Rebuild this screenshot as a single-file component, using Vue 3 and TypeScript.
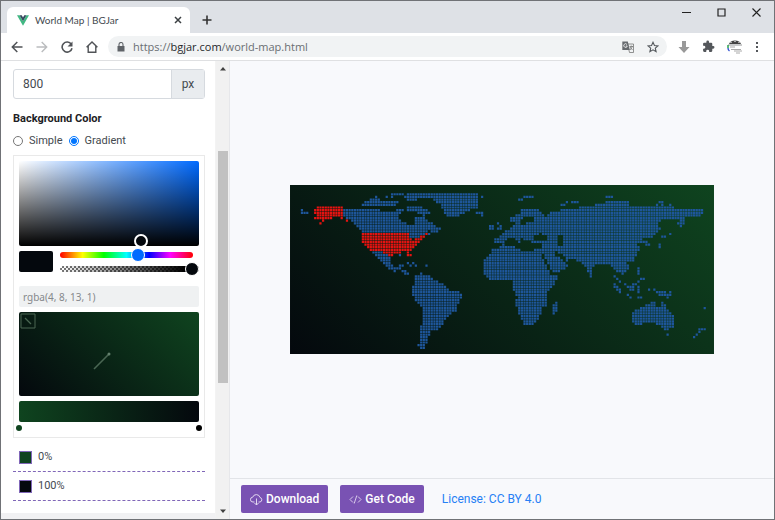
<script setup lang="ts">
import { computed, ref } from 'vue'

type Point = [number, number]

const mapWidth = 1269
const mapHeight = 507
const columns = 160
const rows = 64

/** "x,y x,y ..." to a list of points */
function shape(text: string): Point[] {
  return text.split(' ').map((pair) => pair.split(',').map(Number) as Point)
}

const usa: Point[][] = [
  '85,63 158,63 158,101 148,98 130,98 115,106 100,100 88,106 66,105 82,93 68,84',
  '212,140 352,140 355,157 370,163 380,157 408,144 410,152 395,163 385,175 370,190 360,197 362,214 353,214 350,200 325,203 312,208 300,212 285,204 272,198 250,198 230,190 216,172',
].map(shape)

const land: Point[][] = [
  // Canada
  '158,72 200,70 225,74 240,68 290,80 315,76 325,68 345,76 318,95 340,110 362,122 375,115 372,94 388,93 405,100 420,110 435,123 450,131 430,136 410,135 405,147 388,155 370,160 358,160 350,141 212,140 200,128 190,112 180,106 175,100 158,98',
  // Arctic islands
  '212,62 220,50 240,46 245,58 235,66',
  '228,46 262,34 275,48 300,50 296,66 275,66 255,60 240,68',
  '305,27 330,25 345,28 425,25 425,42 395,38 380,46 352,44 340,34 305,36',
  '300,44 325,48 320,62 300,60',
  '350,66 372,62 390,66 416,78 418,90 395,92 375,82 352,80',
  // Greenland
  '428,25 562,25 562,70 535,76 515,86 492,98 470,96 460,80 452,60 430,50',
  '555,78 585,78 576,92 558,90',
  // Mexico and Central America
  '238,196 272,198 300,212 304,225 304,240 320,246 328,236 340,234 335,250 350,253 355,272 345,270 332,258 318,252 290,248 278,232 268,225 262,212 250,208',
  // South America
  '370,275 390,264 415,270 430,280 442,290 458,293 465,305 485,317 510,322 518,328 508,345 502,365 495,382 477,385 465,405 455,420 440,435 422,440 412,455 415,468 405,475 408,490 390,490 383,480 390,460 385,447 392,425 395,385 395,363 380,355 370,335 362,320 365,305 373,293',
  // Africa
  '578,250 580,225 595,210 608,190 630,185 670,180 675,190 700,197 750,200 757,220 768,245 783,270 805,270 803,280 787,300 773,315 768,335 772,355 755,370 745,400 730,415 715,423 700,420 688,395 683,370 675,360 680,335 667,310 663,287 645,283 600,287 580,270',
  '790,352 805,348 800,375 790,390 782,385 785,370',
  // Europe and Asia
  '608,160 620,160 635,146 665,125 673,112 655,107 658,96 685,86 690,73 730,70 755,78 770,82 806,80 810,75 860,70 870,60 915,66 915,56 970,47 1010,46 1015,60 1075,60 1135,65 1170,70 1240,73 1240,90 1205,95 1185,95 1180,115 1167,130 1160,120 1165,103 1110,107 1100,120 1115,130 1105,140 1090,155 1055,163 1070,170 1078,182 1066,186 1058,172 1040,170 1045,190 1040,210 1025,230 1000,235 1020,240 1002,262 1002,270 980,258 968,248 950,237 935,237 910,240 902,277 890,258 880,240 865,226 830,225 822,233 833,245 800,260 785,263 775,245 765,220 757,202 710,190 700,174 688,178 675,158 650,160 640,170 630,178 608,178',
  // Australia and New Guinea
  '1020,377 1040,375 1055,365 1080,350 1095,350 1095,360 1110,365 1115,345 1125,365 1145,385 1153,410 1145,430 1125,435 1105,420 1080,410 1055,415 1030,422 1025,400',
  '1127,440 1138,440 1136,452 1128,450',
  '1095,312 1115,320 1135,322 1145,330 1130,338 1115,332 1100,330',
  '1010,300 1020,298 1028,290 1030,313 1015,315 1008,308',
  '966,288 980,302 995,318 990,326 978,312 966,300',
  '1222,425 1242,432 1218,448 1212,461 1200,462 1212,446 1220,440',
  // British Isles, Japan
  '618,107 627,107 628,118 636,128 634,136 618,134 624,122',
  '598,122 612,120 610,132 598,132',
  '1080,190 1100,186 1108,170 1114,170 1113,186 1095,194 1080,194',
  '1113,148 1124,153 1122,160 1112,158',
].map(shape)

const water: Point[][] = [
  '690,102 712,93 728,98 735,104 700,116 688,118',
  '755,78 778,82 770,92 757,90',
  '733,152 750,146 772,156 770,166 733,166',
  '798,150 815,148 815,180 800,180 804,165',
  '684,158 694,160 705,172 695,175',
  '705,168 717,165 722,174 755,178 755,190 706,186',
  '795,200 808,204 828,220 822,230 806,216 795,210',
].map(shape)

const islets: Point[] = shape(
  '32,78 32,86 40,82 48,82 55,82 92,114 100,106 174,106 573,33 410,150 418,146 428,142 436,142 444,142 ' +
    '350,230 365,230 378,238 412,244 333,210 360,245 684,41 692,41 700,38 708,34 716,38 724,34 ' +
    '812,62 820,58 828,54 844,48 852,48 860,48 944,33 952,33 960,38 1098,56 1104,50 1116,48 1114,60 1136,62 ' +
    '1142,150 1046,248 1041,256 1046,265 1054,279 1062,279 984,292 1040,312 1044,320 1040,304 1044,288 ' +
    '1012,332 1020,334 1042,338 1054,338 1075,312 1088,314 1140,324 1238,366 638,180 ' +
    '300,246 315,260 200,120 208,128 260,40 290,38 1036,300 974,276 982,284 1000,296',
)

function inside(x: number, y: number, polygon: Point[]): boolean {
  let hit = false
  for (let i = 0, j = polygon.length - 1; i < polygon.length; j = i++) {
    const [ax, ay] = polygon[i]
    const [bx, by] = polygon[j]
    if (ay > y !== by > y && x < ((bx - ax) * (y - ay)) / (by - ay) + ax) hit = !hit
  }
  return hit
}

const dots = computed(() => {
  const dx = mapWidth / columns
  const dy = mapHeight / rows
  const marked = new Set(islets.map(([x, y]) => `${Math.floor(x / dx)}:${Math.floor(y / dy)}`))
  let blue = ''
  let red = ''
  for (let r = 0; r < rows; r++) {
    for (let c = 0; c < columns; c++) {
      const x = (c + 0.5) * dx
      const y = (r + 0.5) * dy
      const cell = `M${(x - 3.3).toFixed(1)} ${(y - 3.3).toFixed(1)}h6.6v6.6h-6.6z`
      if (usa.some((p) => inside(x, y, p))) red += cell
      else if (marked.has(`${c}:${r}`)) {
        if (x < 180 && x > 60) red += cell
        else blue += cell
      } else if (land.some((p) => inside(x, y, p)) && !water.some((p) => inside(x, y, p))) blue += cell
    }
  }
  return { blue, red }
})

const width = ref('800')
const mode = ref('gradient')
const hue = ref(215)
const alpha = ref(100)
const color = ref('rgba(4, 8, 13, 1)')
const stops = [
  { color: '#0f441f', at: '0%' },
  { color: '#04080d', at: '100%' },
]
</script>

<template>
  <div class="window">
    <header class="tabs">
      <div class="tab">
        <svg class="vue" viewBox="0 0 24 21" aria-hidden="true">
          <path d="M0 0h5l7 12 7-12h5L12 21z" fill="#41b883" />
          <path d="M5 0h4.500L12 4.500 14.500 0H19l-7 12z" fill="#35495e" />
        </svg>
        <span class="tab-title">World Map | BGJar</span>
        <button class="icon" aria-label="Close tab">
          <svg width="8" height="8" viewBox="0 0 8 8"><path d="M1 1l6 6M7 1L1 7" stroke="#3c4043" stroke-width="1.500" /></svg>
        </button>
      </div>
      <button class="icon plus" aria-label="New tab">
        <svg width="10" height="10" viewBox="0 0 10 10"><path d="M5 .5v9M.5 5h9" stroke="#333" stroke-width="1.600" /></svg>
      </button>
      <div class="controls">
        <button class="icon" aria-label="Minimize">
          <svg width="9" height="9" viewBox="0 0 9 9"><path d="M0 4.500h9" stroke="#222" /></svg>
        </button>
        <button class="icon" aria-label="Maximize">
          <svg width="9" height="9" viewBox="0 0 9 9"><path d="M1 1h7v7H1z" fill="none" stroke="#222" stroke-width="1.200" /></svg>
        </button>
        <button class="icon" aria-label="Close">
          <svg width="9" height="9" viewBox="0 0 9 9"><path d="M.5.5l8 8M8.500.5l-8 8" stroke="#222" stroke-width="1.100" /></svg>
        </button>
      </div>
    </header>

    <nav class="toolbar">
      <div class="nav">
        <button class="icon" aria-label="Back">
          <svg width="12" height="12" viewBox="0 0 12 12"><path d="M11.500 6H1.500M6.300 1L1.300 6l5 5" fill="none" stroke="#505357" stroke-width="1.500" /></svg>
        </button>
        <button class="icon" aria-label="Forward">
          <svg width="12" height="12" viewBox="0 0 12 12"><path d="M.5 6h10M5.700 1l5 5-5 5" fill="none" stroke="#babcbe" stroke-width="1.400" /></svg>
        </button>
        <button class="icon" aria-label="Reload">
          <svg width="12" height="12" viewBox="0 0 12 12"><path d="M10.300 3.300A5 5 0 1 0 11 7.200" fill="none" stroke="#505357" stroke-width="1.600" /><path d="M11.500.5v5h-5z" fill="#505357" /></svg>
        </button>
        <button class="icon" aria-label="Home">
          <svg width="12" height="12" viewBox="0 0 12 12"><path d="M.6 6.200L6 1l5.400 5.200M2.200 5v6.200h7.600V5" fill="none" stroke="#505357" stroke-width="1.400" /></svg>
        </button>
      </div>
      <div class="address">
        <svg width="8" height="10" viewBox="0 0 8 10" aria-hidden="true"><path d="M.5 4h7v5.500h-7z" fill="#5f6368" /><path d="M2 4.500V2.500a2 2 0 0 1 4 0v2" fill="none" stroke="#5f6368" stroke-width="1.100" /></svg>
        <span class="url">https://<b>bgjar.com</b>/world-map.html</span>
        <button class="icon" aria-label="Translate this page">
          <svg width="12" height="12" viewBox="0 0 12 12">
            <path d="M5.500 3h6v8.500h-4z" fill="#f1f3f4" stroke="#777" stroke-width=".8" />
            <path d="M.3.5h5.500l2 8.500H.3z" fill="#666a6e" />
            <path d="M5 3.500A1.800 1.800 0 1 0 5.300 5H3.800" fill="none" stroke="#fff" stroke-width=".8" />
            <path d="M7.500 5.500h3.500M9.200 4.500v1M10.500 5.500L8 9M8 6l2.500 3" fill="none" stroke="#666" stroke-width=".7" />
          </svg>
        </button>
        <button class="icon" aria-label="Bookmark this tab">
          <svg width="12" height="12" viewBox="0 0 24 24"><path d="M12 2.500l2.900 6.500 7 .7-5.300 4.700 1.600 7L12 17.700 5.800 21.400l1.600-7L2.100 9.700l7-.7z" fill="none" stroke="#54585c" stroke-width="2.200" /></svg>
        </button>
      </div>
      <div class="extensions">
        <button class="icon" aria-label="Downloads">
          <svg width="12" height="12" viewBox="0 0 12 12"><path d="M4 0h4v6h3.500L6 12 .5 6H4z" fill="#999" /></svg>
        </button>
        <button class="icon" aria-label="Extensions">
          <svg width="13" height="13" viewBox="0 0 24 24"><path d="M20.500 11H19V7a2 2 0 0 0-2-2h-4V3.500a2.500 2.500 0 0 0-5 0V5H4a2 2 0 0 0-2 2v3.800h1.500a2.700 2.700 0 0 1 0 5.400H2V20a2 2 0 0 0 2 2h3.800v-1.500a2.700 2.700 0 0 1 5.400 0V22H17a2 2 0 0 0 2-2v-4h1.500a2.500 2.500 0 0 0 0-5z" fill="#54575b" /></svg>
        </button>
        <button class="icon" aria-label="Profile">
          <svg width="16" height="14" viewBox="0 0 16 14">
            <path d="M2 4Q3 .5 8 .5T14 4z" fill="#444" /><path d="M3 2.500h2M7 1.500h2M11 2.500h2" stroke="#aaa" />
            <path d="M1 4h14v2H1z" fill="#c9cacb" /><path d="M1 5v3" stroke="#1c9e45" stroke-width="1.400" /><path d="M1 8q0 2 1.500 3" fill="none" stroke="#3152d2" stroke-width="1.400" />
            <path d="M3 7h5M4 9.500h10M7 11h8M9 13h4" stroke="#aaa" />
          </svg>
        </button>
        <button class="icon" aria-label="Menu">
          <svg width="4" height="12" viewBox="0 0 4 12"><path d="M1 1h2v2H1zM1 5h2v2H1zM1 9h2v2H1z" fill="#54575b" /></svg>
        </button>
      </div>
    </nav>

    <div class="page">
      <aside class="sidebar">
        <div class="settings">
          <div class="size">
            <input v-model="width" type="text" aria-label="Width" />
            <span>px</span>
          </div>
          <h2>Background Color</h2>
          <div class="modes">
            <label><input v-model="mode" type="radio" name="mode" value="simple" />Simple</label>
            <label><input v-model="mode" type="radio" name="mode" value="gradient" />Gradient</label>
          </div>

          <div class="picker">
            <div class="shade"><span class="shade-handle"></span></div>
            <div class="channels">
              <span class="swatch"></span>
              <div class="sliders">
                <input v-model="hue" class="hue" type="range" min="0" max="360" aria-label="Hue" />
                <input v-model="alpha" class="alpha" type="range" min="0" max="100" aria-label="Opacity" />
              </div>
            </div>
            <input v-model="color" class="value" type="text" aria-label="Color value" />
            <div class="angle">
              <button class="linear" aria-label="Linear gradient">
                <svg width="16" height="16" viewBox="0 0 16 16"><path d="M1 1h14v14H1z" fill="none" stroke="#4a6753" /><path d="M5 5l6 6" stroke="#4a6753" stroke-width="1.300" /></svg>
              </button>
              <svg class="needle" width="18" height="18" viewBox="0 0 18 18" aria-hidden="true"><path d="M1 17L16 2" stroke="#496653" stroke-width="1.600" /><circle cx="16" cy="2" r="1.500" fill="#64806d" /></svg>
            </div>
            <div class="ramp"></div>
            <div class="markers"><span></span><span></span></div>
          </div>

          <ul class="stops">
            <li v-for="stop in stops" :key="stop.at">
              <span class="chip" :style="{ background: stop.color }"></span>{{ stop.at }}
            </li>
          </ul>
        </div>
        <div class="scrollbar" aria-hidden="true">
          <svg width="8" height="5" viewBox="0 0 8 5"><path d="M1 4.500L4 1l3 3.500z" fill="#404040" /></svg>
          <div class="track"><div class="thumb"></div></div>
          <svg width="8" height="5" viewBox="0 0 8 5"><path d="M1 .5L4 4l3-3.500z" fill="#404040" /></svg>
        </div>
      </aside>

      <main>
        <div class="canvas">
          <svg class="map" :viewBox="`0 0 ${mapWidth} ${mapHeight}`" role="img" aria-label="World map">
            <defs>
              <linearGradient id="ground" gradientUnits="userSpaceOnUse" x1="190" y1="698" x2="1079" y2="-191">
                <stop offset="0" stop-color="#04080d" />
                <stop offset="1" stop-color="#0f441f" />
              </linearGradient>
            </defs>
            <rect :width="mapWidth" :height="mapHeight" fill="url(#ground)" />
            <path :d="dots.blue" fill="#1e569b" />
            <path :d="dots.red" fill="#e61311" />
          </svg>
        </div>
        <footer>
          <button class="action">
            <svg width="13" height="13" viewBox="0 0 13 13" aria-hidden="true"><path d="M4.500 9H3A2.400 2.400 0 0 1 2.700 4.200 3.800 3.800 0 0 1 10 4.500 2.300 2.300 0 0 1 10 9H8.500M6.500 5.500v6.500M4.500 10l2 2 2-2" fill="none" stroke="#e3d8f0" /></svg>
            Download
          </button>
          <button class="action">
            <svg width="13" height="13" viewBox="0 0 13 13" aria-hidden="true"><path d="M4 3.500L1 6.500l3 3M9 3.500l3 3-3 3M7.800 2.500l-2.600 8" fill="none" stroke="#d8caea" /></svg>
            Get Code
          </button>
          <a href="#license">License: CC BY 4.0</a>
        </footer>
      </main>
    </div>
  </div>
</template>

<style>
body {
  margin: 0;
}
</style>

<style scoped>
* {
  box-sizing: border-box;
}
.window {
  display: flex;
  flex-direction: column;
  min-height: 100vh;
  border: 1px solid #707276;
  background: #fff;
  color: #444a50;
  font: 11px/16px Roboto, sans-serif;
}
button,
input {
  font: inherit;
  color: inherit;
}
svg {
  display: block;
  flex: none;
}
.icon {
  display: flex;
  padding: 0;
  border: 0;
  background: none;
}
.tabs {
  display: flex;
  padding: 6px 0 0 6px;
  height: 32px;
  background: #dee1e6;
}
.tab {
  display: flex;
  align-items: center;
  width: 183px;
  padding: 0 8px 0 10px;
  border-radius: 6px 6px 0 0;
  background: #fff;
}
.vue {
  width: 12px;
  height: 11px;
}
.tab-title {
  flex: 1;
  padding-left: 6px;
  font: 10px/16px Lato, sans-serif;
}
.plus {
  align-self: center;
  margin-left: 12px;
}
.controls {
  display: flex;
  align-items: center;
  gap: 26px;
  height: 10px;
  margin-left: auto;
  padding-right: 13px;
}
.toolbar {
  display: flex;
  align-items: center;
  height: 28px;
  padding: 0 15px 0 10px;
  border-bottom: 1px solid #dfe0e2;
}
.nav {
  display: flex;
  gap: 13px;
}
.address {
  display: flex;
  flex: 1;
  align-items: center;
  height: 21px;
  margin-left: 10px;
  padding: 0 8px 0 9px;
  border-radius: 11px;
  background: #f1f3f4;
}
.address .icon {
  margin-left: 13px;
}
.url {
  flex: 1;
  padding-left: 8px;
  color: #6a6e72;
  font: 11px/16px "Open Sans", sans-serif;
}
.url b {
  color: #26282b;
  font-weight: 400;
}
.extensions {
  display: flex;
  align-items: center;
  gap: 12px;
  margin-left: 11px;
}
.page {
  display: flex;
  flex: 1;
}
.sidebar {
  display: flex;
  flex: none;
  width: 228px;
}
.settings {
  flex: 1;
  min-width: 0;
  padding: 8px 10px 0 12px;
  border-right: 1px solid #f3f3f3;
  border-bottom: 6px solid #f1f1f3;
}
.size {
  display: flex;
  height: 30px;
  border: 1px solid #d6dadf;
  border-radius: 3px;
  font-size: 12px;
}
.size input {
  flex: 1;
  min-width: 0;
  padding: 0 9px;
  border: 0;
  background: none;
}
.size span {
  display: grid;
  place-items: center;
  width: 33px;
  border-left: 1px solid #d6dadf;
  background: #e9ecef;
}
h2 {
  margin: 12px 0 6px;
  color: #1d2125;
  font-size: 11px;
  line-height: 16px;
  font-weight: 700;
}
.modes {
  display: flex;
  gap: 6px;
}
.modes label {
  display: flex;
  align-items: center;
  gap: 6px;
}
.modes input {
  width: 10px;
  height: 10px;
  margin: 0;
  accent-color: #0075ff;
}
.picker {
  margin-top: 6px;
  padding: 5px;
  border: 1px solid #e9e9e9;
}
.shade {
  position: relative;
  height: 85px;
  border-radius: 2px;
  background: linear-gradient(to top, #000, transparent), linear-gradient(to right, #fff, #006aff);
}
.shade-handle {
  position: absolute;
  left: 68%;
  top: 86%;
  width: 14px;
  height: 14px;
  margin-left: -7px;
  border: 2px solid #fff;
  border-radius: 50%;
  background: #04080d;
}
.channels {
  display: flex;
  align-items: flex-start;
  gap: 7px;
  margin-top: 5px;
}
.swatch {
  width: 34px;
  height: 21px;
  border-radius: 2px;
  background: #04080d;
}
.sliders {
  display: grid;
  flex: 1;
  gap: 2px;
  min-width: 0;
  margin-top: -2px;
}
.sliders input {
  appearance: none;
  width: 100%;
  min-width: 0;
  height: 12px;
  margin: 0;
  background: none;
}
.sliders .hue {
  width: calc(100% - 6px);
}
.sliders input::-webkit-slider-runnable-track {
  height: 6px;
  border-radius: 3px;
}
.hue::-webkit-slider-runnable-track {
  background: linear-gradient(to right, red, #ff0 17%, lime 33%, cyan 50%, blue 67%, magenta 83%, red);
}
.alpha::-webkit-slider-runnable-track {
  background: linear-gradient(to right, transparent, #000 90%), repeating-conic-gradient(#777 0 25%, #fff 0 50%) 0 0 / 4px 4px;
}
.sliders input::-webkit-slider-thumb {
  appearance: none;
  width: 14px;
  height: 14px;
  margin-top: -4px;
  border: 1px solid #fff;
  border-radius: 50%;
  background: #04080d;
}
.sliders .hue::-webkit-slider-thumb {
  background: #006aff;
}
.value {
  display: block;
  width: 100%;
  height: 21px;
  margin: 11px 0 5px;
  padding: 0 4px;
  border: 0;
  border-radius: 2px;
  background: #eff1f2;
  color: #85888b;
  font: 10px/16px "Noto Sans", sans-serif;
}
.angle {
  position: relative;
  display: grid;
  place-items: center;
  height: 84px;
  border-radius: 2px;
  background: linear-gradient(45deg, #04080d, #0f441f);
}
.linear {
  position: absolute;
  top: 1px;
  left: 1px;
  padding: 0;
  border: 0;
  background: none;
}
.needle {
  margin: 14px 14px 0 0;
}
.ramp {
  height: 21px;
  margin-top: 5px;
  border-radius: 2px;
  background: linear-gradient(to right, #0f441f, #04080d);
}
.markers {
  display: flex;
  justify-content: space-between;
  height: 7px;
  margin: 3px -3px 0;
}
.markers span {
  width: 6px;
  height: 6px;
  border-radius: 50%;
  background: #0f441f;
}
.markers span:last-child {
  background: #000;
}
.stops {
  margin: 5px 0 0;
  padding: 0;
  list-style: none;
}
.stops li {
  display: flex;
  align-items: center;
  gap: 6px;
  height: 29px;
  padding-left: 6px;
  border-bottom: 1px dashed #8067b8;
}
.chip {
  width: 13px;
  height: 13px;
  border: 1px solid #8067b8;
}
.scrollbar {
  display: flex;
  flex: none;
  flex-direction: column;
  align-items: center;
  width: 13px;
  padding: 5px 0;
  background: #f1f1f1;
}
.track {
  flex: 1;
  width: 10px;
}
.thumb {
  height: 53%;
  margin-top: 80px;
  background: #c1c1c1;
}
main {
  display: flex;
  flex: 1;
  flex-direction: column;
  min-width: 0;
  border-left: 1px solid #e6e7ea;
  background: #f8f9fc;
}
.canvas {
  display: grid;
  flex: 1;
  align-items: center;
  padding: 0 60px;
}
.map {
  width: 100%;
}
footer {
  display: flex;
  align-items: center;
  gap: 12px;
  height: 41px;
  padding: 0 11px;
  border-top: 1px solid #e2e4e8;
  font-size: 12px;
}
.action {
  display: flex;
  align-items: center;
  gap: 3px;
  height: 28px;
  padding: 0 9px;
  border: 0;
  border-radius: 2px;
  background: #7952b3;
  color: #fff;
  font-weight: 500;
}
footer a {
  margin-left: 6px;
  color: #2680f5;
  text-decoration: none;
}
</style>
